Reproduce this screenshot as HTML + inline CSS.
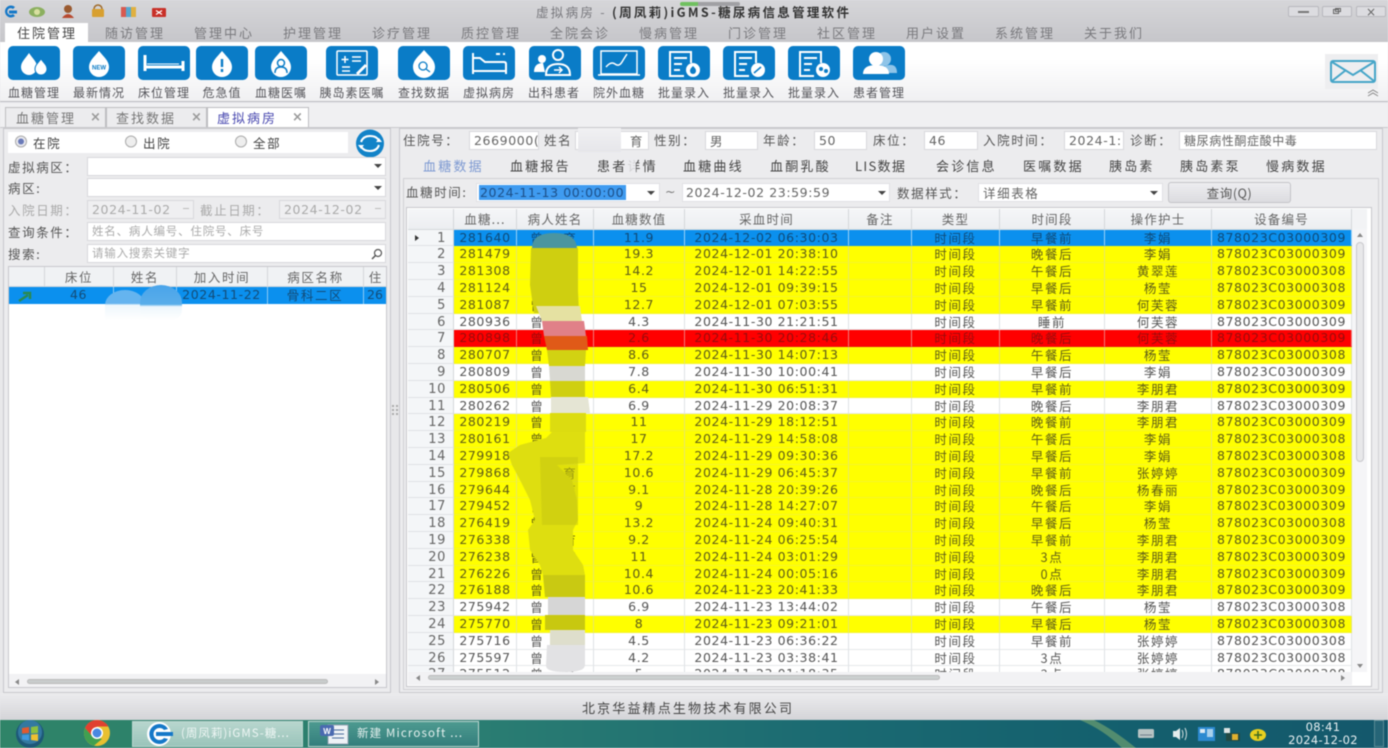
<!DOCTYPE html>
<html lang="zh"><head><meta charset="utf-8"><title>虚拟病房</title>
<style>
*{box-sizing:border-box;margin:0;padding:0}
html,body{width:1388px;height:748px;overflow:hidden;background:#e8e8ea}
body{position:relative;font-family:"DejaVu Sans","Noto Sans CJK SC",sans-serif;font-size:12.5px;color:#555}
#root{position:absolute;left:0;top:0;width:1388px;height:748px;overflow:hidden;filter:blur(.6px)}
.a{position:absolute;white-space:nowrap}
.c{font-family:"Noto Sans CJK SC",sans-serif}
.m{top:24px;font-size:13px;letter-spacing:2px;color:#7a7a7e;line-height:18px;font-family:"Noto Sans CJK SC",sans-serif}
.ic{position:absolute;top:46px;width:52px;height:34px;background:#0a7cc7;border-radius:5px}
.ic svg{display:block;width:52px;height:34px}
.lb{position:absolute;top:85px;width:80px;text-align:center;font:12px/15px "Noto Sans CJK SC",sans-serif;color:#55555a;letter-spacing:1px}
.dt{top:108px;font:13px/19px "Noto Sans CJK SC",sans-serif;letter-spacing:2px;color:#777}
.x{top:108px;font:bold 13px/19px "DejaVu Sans",sans-serif;color:#999}
.fl{font:12.5px/18px "Noto Sans CJK SC",sans-serif;letter-spacing:1.6px;color:#555}
.f{position:absolute;background:#fff;border:1px solid #d8d8dc;height:19px;line-height:17px;padding-left:4px;color:#666;overflow:hidden;white-space:nowrap;letter-spacing:.6px}
.g{background:#efeff1;color:#aaa}
.ar{position:absolute;width:0;height:0;border:4px solid transparent;border-top:4px solid #444;border-bottom:0}
.t{top:157px;font:13px/17px "Noto Sans CJK SC",sans-serif;letter-spacing:2.2px;color:#444}
.hd{position:absolute;display:grid;left:408px;top:209px;height:20.5px;grid-template-columns:46px 63px 77px 91px 164px 63px 88px 105px 107px 140px;background:linear-gradient(#f5f6f8,#eceef1);border-bottom:1px solid #d5d8dc}
.hd span{border-right:1px solid #d4d7da;text-align:center;font:12.5px/20px "Noto Sans CJK SC",sans-serif;letter-spacing:1.2px;color:#666}
.tb{position:absolute;left:408px;top:229.6px;width:944px;height:443px;overflow:hidden}
.r{display:grid;height:16.8px;grid-template-columns:46px 63px 77px 91px 164px 63px 88px 105px 107px 140px;line-height:16.5px;text-align:center;background:#fff;color:#555;letter-spacing:.6px}
.r span{border-right:1px solid #dfe2e5;border-bottom:1px solid #e6e8ea;overflow:hidden;white-space:nowrap}
.r span:first-child{background:#f4f6f8;color:#666;text-align:right;padding:1px 7px 0 0;border-right:1px solid #d4d7da;border-bottom:1px solid #e0e2e6;font-size:13px}
.r span:nth-child(7),.r span:nth-child(8),.r span:nth-child(9){font-family:"Noto Sans CJK SC",sans-serif;font-size:12.5px;letter-spacing:1.6px}
.r span:nth-child(3){font-family:"Noto Sans CJK SC",sans-serif;font-size:12.5px;letter-spacing:4px}
.y{background:#ff0;color:#5e5c18}.y span{border-right-color:#e6e66c;border-bottom-color:#f4f42c}
.d{background:#f00;color:#980c0c}.d span{border-right-color:#f07a7a;border-bottom-color:#e81010}
.b{background:#0b90ee;color:#0f4a78}.b span{border-right-color:#9ad2f8;border-bottom-color:#0b90ee}
.s{position:absolute}
.ts{position:absolute;top:721px;height:26px;border:1px solid #bcd6d0}
</style></head><body><div id="root">

<!-- title + menu -->
<div class="a" style="left:0;top:0;width:1388px;height:42px;background:linear-gradient(#d6d6d9,#c6c6ca)"></div>
<svg class="a" style="left:0;top:0" width="180" height="22" viewBox="0 0 180 22">
<path d="M15 7a6 6 0 1 0 0 9l-2-2a3.400 3.400 0 1 1 0-5z" fill="#1578c8"/><rect x="9" y="10.500" width="8" height="3" fill="#1578c8"/>
<ellipse cx="37" cy="12" rx="8" ry="5" fill="#8cb060"/><circle cx="37" cy="12" r="3" fill="#d8e0a0"/>
<circle cx="68" cy="9" r="4" fill="#9a5a30"/><path d="M62 18q6-8 12 0z" fill="#b84a30"/>
<rect x="92" y="9" width="12" height="8" rx="1" fill="#d8a030"/><path d="M94 9a4 4 0 0 1 8 0" fill="none" stroke="#a06a28" stroke-width="1.500"/>
<rect x="121" y="7" width="5" height="10" fill="#d85a50"/><rect x="126" y="7" width="5" height="10" fill="#58a8d0"/><rect x="131" y="7" width="5" height="10" fill="#e0b040"/>
<rect x="152" y="8" width="14" height="9" rx="1" fill="#c83028"/><path d="M156 10.500l6 4m0-4l-6 4" stroke="#fff" stroke-width="1.200"/>
</svg>
<div class="a" style="left:680px;top:2px;width:60px;height:4px;border-radius:3px;background:linear-gradient(90deg,#70c060 0,#70c060 30%,#a0a0a4 30%)"></div>
<div class="a c" style="left:536px;top:3px;font-size:12.5px;line-height:17px;color:#77777c;letter-spacing:2.3px">虚拟病房 - <span style="color:#333;font-weight:bold">(周凤莉)iGMS-糖尿病信息管理软件</span></div>
<div class="a" style="left:1288px;top:6px;width:31px;height:11px;background:#dcdce0;border:1px solid #b8b8bd;border-radius:2px"></div>
<div class="a" style="left:1298px;top:11px;width:11px;height:2px;background:#777"></div>
<div class="a" style="left:1322px;top:6px;width:30px;height:11px;background:#dcdce0;border:1px solid #b8b8bd;border-radius:2px"></div>
<div class="a" style="left:1333px;top:9px;width:6px;height:5px;border:1px solid #666"></div><div class="a" style="left:1335px;top:8px;width:6px;height:4px;border:1px solid #666"></div>
<div class="a" style="left:1356px;top:6px;width:30px;height:11px;background:#dcdce0;border:1px solid #b8b8bd;border-radius:2px"></div>
<div class="a" style="left:1366px;top:4px;font:12px/17px 'DejaVu Sans',sans-serif;color:#666">×</div>

<div class="a" style="left:5px;top:23px;width:83px;height:20px;background:#fff"></div>
<div class="a m" style="left:17px;color:#444">住院管理</div>
<div class="a m" style="left:105px">随访管理</div>
<div class="a m" style="left:194px">管理中心</div>
<div class="a m" style="left:283px">护理管理</div>
<div class="a m" style="left:372px">诊疗管理</div>
<div class="a m" style="left:461px">质控管理</div>
<div class="a m" style="left:550px">全院会诊</div>
<div class="a m" style="left:639px">慢病管理</div>
<div class="a m" style="left:728px">门诊管理</div>
<div class="a m" style="left:817px">社区管理</div>
<div class="a m" style="left:906px">用户设置</div>
<div class="a m" style="left:995px">系统管理</div>
<div class="a m" style="left:1084px">关于我们</div>

<!-- toolbar -->
<div class="a" style="left:0;top:42px;width:1388px;height:60px;background:linear-gradient(#fff 30%,#f0f0f2);border-bottom:1px solid #bcbcc0"></div>

<div class="ic" style="left:8px"><svg viewBox="0 0 52 34"><path d="M21 7c4 6 8 9 8 14a8 8 0 0 1-16 0c0-5 4-8 8-14z" fill="#fff"/><path d="M33 13c3 4 6 6 6 10a6 6 0 0 1-12 0c0-4 3-6 6-10z" fill="#fff" stroke="#0a7cc7"/></svg></div>
<div class="ic" style="left:73px"><svg viewBox="0 0 52 34"><path d="M26 5c5 6 10 10 10 16a10 10 0 0 1-20 0c0-6 5-10 10-16z" fill="#fff"/><text x="26" y="23.500" font-size="6" font-weight="bold" fill="#0a7cc7" text-anchor="middle" font-family="Liberation Sans">NEW</text></svg></div>
<div class="ic" style="left:138px"><svg viewBox="0 0 52 34"><path d="M7 9v16M45 15v10M7 21h38" stroke="#fff" stroke-width="3" fill="none"/><path d="M9 18h32" stroke="#fff" stroke-width="1"/></svg></div>
<div class="ic" style="left:196px"><svg viewBox="0 0 52 34"><path d="M26 5c5 6 10 10 10 16a10 10 0 0 1-20 0c0-6 5-10 10-16z" fill="#fff"/><path d="M26 13v8M26 23v3" stroke="#0a7cc7" stroke-width="2.400"/></svg></div>
<div class="ic" style="left:255px"><svg viewBox="0 0 52 34"><path d="M26 5c5 6 10 10 10 16a10 10 0 0 1-20 0c0-6 5-10 10-16z" fill="#fff"/><circle cx="26" cy="17" r="3.500" fill="none" stroke="#0a7cc7" stroke-width="1.500"/><path d="M20 27q0-6 6-6t6 6" fill="none" stroke="#0a7cc7" stroke-width="1.500"/></svg></div>
<div class="ic" style="left:326px"><svg viewBox="0 0 52 34"><rect x="11" y="5" width="30" height="24" rx="1" fill="none" stroke="#fff" stroke-width="1.500"/><path d="M19 10v7M15.500 13.500h7M26 11h9M26 15h9M16 21h8M16 25h8" stroke="#fff" stroke-width="1.500"/><path d="M30 27l9-9 2 2-9 9z" fill="#fff"/></svg></div>
<div class="ic" style="left:398px"><svg viewBox="0 0 52 34"><path d="M26 4c5 6 11 10 11 17a11 11 0 0 1-22 0c0-7 6-11 11-17z" fill="#fff"/><circle cx="25" cy="20" r="4" fill="none" stroke="#0a7cc7" stroke-width="1.300"/><path d="M28 23l4 3" stroke="#0a7cc7" stroke-width="1.300"/></svg></div>
<div class="ic" style="left:463px"><svg viewBox="0 0 52 34"><path d="M10 7v21M10 25h33v3M43 25v-7q0-2-2-2H22l-5-4h-7" fill="none" stroke="#fff" stroke-width="2"/><path d="M33 8h4M40 8h2" stroke="#fff" stroke-width="2"/></svg></div>
<div class="ic" style="left:529px"><svg viewBox="0 0 52 34"><circle cx="29" cy="9" r="5" fill="none" stroke="#fff" stroke-width="2"/><path d="M17 29q0-11 12-11t12 11z" fill="none" stroke="#fff" stroke-width="2"/><circle cx="13" cy="13" r="4" fill="#fff"/><path d="M5 26q0-9 9-9l2 9z" fill="#fff"/><path d="M25 24h8m-3-3l3 3-3 3" stroke="#fff" stroke-width="1.500" fill="none"/></svg></div>
<div class="ic" style="left:593px"><svg viewBox="0 0 52 34"><rect x="8" y="5" width="36" height="23" fill="none" stroke="#fff" stroke-width="1.500"/><path d="M5 29h42" stroke="#fff" stroke-width="1.500"/><path d="M13 21q5-6 9-3t7-2 5-8" fill="none" stroke="#fff" stroke-width="1.500"/></svg></div>
<div class="ic" style="left:658px"><svg viewBox="0 0 52 34"><path d="M33 17V6H12v24h14" fill="none" stroke="#fff" stroke-width="2"/><path d="M16 12h13M16 18h8M16 24h6" stroke="#fff" stroke-width="2"/><circle cx="35" cy="24" r="7" fill="#fff"/><path d="M35 20c2 2 3 3 3 5a3 3 0 0 1-6 0c0-2 1-3 3-5z" fill="#0a7cc7"/></svg></div>
<div class="ic" style="left:723px"><svg viewBox="0 0 52 34"><path d="M33 17V6H12v24h14" fill="none" stroke="#fff" stroke-width="2"/><path d="M16 12h13M16 18h8M16 24h6" stroke="#fff" stroke-width="2"/><circle cx="35" cy="24" r="7" fill="#fff"/><path d="M31 27l7-6" stroke="#0a7cc7" stroke-width="1.500"/></svg></div>
<div class="ic" style="left:788px"><svg viewBox="0 0 52 34"><path d="M33 17V6H12v24h14" fill="none" stroke="#fff" stroke-width="2"/><path d="M16 12h13M16 18h8M16 24h6" stroke="#fff" stroke-width="2"/><circle cx="35" cy="24" r="7" fill="#fff"/><circle cx="33" cy="23" r="2" fill="#0a7cc7"/><circle cx="38" cy="25" r="2" fill="#0a7cc7"/></svg></div>
<div class="ic" style="left:853px"><svg viewBox="0 0 52 34"><circle cx="31" cy="13" r="7" fill="#8fc4e8"/><path d="M28 27q0-7 8-8t8 8z" fill="#8fc4e8"/><circle cx="23" cy="13" r="7" fill="#fff"/><path d="M10 28q0-9 13-9t13 9z" fill="#fff"/></svg></div>

<div class="lb" style="left:-6px">血糖管理</div><div class="lb" style="left:59px">最新情况</div><div class="lb" style="left:124px">床位管理</div><div class="lb" style="left:182px">危急值</div><div class="lb" style="left:241px">血糖医嘱</div><div class="lb" style="left:312px">胰岛素医嘱</div><div class="lb" style="left:384px">查找数据</div><div class="lb" style="left:449px">虚拟病房</div><div class="lb" style="left:514px">出科患者</div><div class="lb" style="left:579px">院外血糖</div><div class="lb" style="left:644px">批量录入</div><div class="lb" style="left:709px">批量录入</div><div class="lb" style="left:774px">批量录入</div><div class="lb" style="left:839px">患者管理</div>

<div class="a" style="left:1325px;top:54px;width:53px;height:35px;background:#eeeef0"></div>
<svg class="a" style="left:1329px;top:59px" width="48" height="25" viewBox="0 0 48 25"><rect x="2" y="2" width="44" height="21" rx="2" fill="none" stroke="#45a5c8" stroke-width="2"/><path d="M3 3l21 13L45 3M3 22l14-11M45 22L31 11" fill="none" stroke="#45a5c8" stroke-width="2"/></svg>
<svg class="a" style="left:1366px;top:88px" width="14" height="9" viewBox="0 0 14 9"><path d="M2 5l5-3 5 3M2 8l5-3 5 3" fill="none" stroke="#888"/></svg>

<!-- doc tabs -->
<div class="a" style="left:0;top:103px;width:1388px;height:24px;background:#f0f0f2"></div>
<div class="a" style="left:5px;top:107px;width:101px;height:21px;background:#ececee;border:1px solid #bdbdc0;border-bottom:0"></div>
<div class="a" style="left:106px;top:107px;width:101px;height:21px;background:#ececee;border:1px solid #bdbdc0;border-bottom:0"></div>
<div class="a" style="left:207px;top:107px;width:102px;height:21px;background:#fff;border:1px solid #bdbdc0;border-bottom:0"></div>
<div class="a dt" style="left:16px">血糖管理</div><div class="a x" style="left:90px">×</div>
<div class="a dt" style="left:116px">查找数据</div><div class="a x" style="left:191px">×</div>
<div class="a dt" style="left:217px;color:#4a4ab0">虚拟病房</div><div class="a x" style="left:292px">×</div>
<div class="a" style="left:0;top:127px;width:1388px;height:1px;background:#c8c8cc"></div>

<!-- left panel -->
<div class="a" style="left:3px;top:128px;width:388px;height:565px;background:#ececee;border:1px solid #c8c8cc"></div>
<div class="a" style="left:8px;top:132px;width:340px;height:21px;background:#fff"></div>
<svg class="a" style="left:8px;top:132px" width="260" height="21" viewBox="0 0 260 21"><circle cx="13" cy="9.500" r="5.500" fill="#e8e8ee" stroke="#aaa"/><circle cx="13" cy="9.500" r="3" fill="#6a7ab8"/><circle cx="123" cy="9.500" r="5.500" fill="#eee" stroke="#aaa"/><circle cx="233" cy="9.500" r="5.500" fill="#eee" stroke="#aaa"/></svg>
<div class="a fl" style="left:33px;top:134px;color:#444">在院</div><div class="a fl" style="left:143px;top:134px;color:#444">出院</div><div class="a fl" style="left:253px;top:134px;color:#444">全部</div>
<svg class="a" style="left:355px;top:129px" width="30" height="29" viewBox="0 0 30 29"><circle cx="15" cy="14.500" r="14" fill="#1283c8"/><path d="M6 13q2-6 9-6t9 5M24 16q-2 6-9 6t-9-5" fill="none" stroke="#fff" stroke-width="2"/><path d="M21 13h6l-3-4zM9 16H3l3 4z" fill="#fff"/></svg>

<div class="a fl" style="left:8px;top:158px">虚拟病区：</div><div class="f" style="left:87px;top:157px;width:299px"></div><div class="ar" style="left:374px;top:164px"></div>
<div class="a fl" style="left:8px;top:179px">病区:</div><div class="f" style="left:87px;top:178px;width:299px"></div><div class="ar" style="left:374px;top:186px"></div>
<div class="a fl" style="left:8px;top:201px;color:#aaa">入院日期：</div><div class="f g" style="left:87px;top:200px;width:107px">2024-11-02</div><div class="a" style="left:183px;top:208px;width:6px;height:1px;background:#bbb"></div>
<div class="a fl" style="left:200px;top:201px;color:#aaa">截止日期：</div><div class="f g" style="left:279px;top:200px;width:107px">2024-12-02</div><div class="a" style="left:375px;top:208px;width:6px;height:1px;background:#bbb"></div>
<div class="a fl" style="left:8px;top:223px">查询条件：</div><div class="f c" style="left:87px;top:222px;width:299px;color:#aaa;font-size:11.5px;letter-spacing:.8px">姓名、病人编号、住院号、床号</div>
<div class="a fl" style="left:8px;top:245px">搜索:</div><div class="f c" style="left:87px;top:244px;width:299px;color:#aaa;font-size:11.5px;letter-spacing:.8px">请输入搜索关键字</div>
<svg class="a" style="left:370px;top:247px" width="14" height="14" viewBox="0 0 14 14"><circle cx="8" cy="6" r="3.500" fill="none" stroke="#555" stroke-width="1.200"/><path d="M5.500 8.500L2 12" stroke="#555" stroke-width="1.500"/></svg>

<div class="a" style="left:8px;top:266px;width:379px;height:422px;background:#fff;border:1px solid #c8c8cc"></div>
<div class="a" style="left:9px;top:267px;width:377px;height:20px;background:#f0f2f4;border-bottom:1px solid #d5d8dc;overflow:hidden"></div>
<div class="a" style="left:44px;top:267px;width:69px;height:20px;border-left:1px solid #d4d7da;text-align:center;font:12.500px/19px 'Noto Sans CJK SC',sans-serif;letter-spacing:1.600px;color:#666">床位</div>
<div class="a" style="left:113px;top:267px;width:63px;height:20px;border-left:1px solid #d4d7da;text-align:center;font:12.500px/19px 'Noto Sans CJK SC',sans-serif;letter-spacing:1.600px;color:#666">姓名</div>
<div class="a" style="left:176px;top:267px;width:91px;height:20px;border-left:1px solid #d4d7da;text-align:center;font:12.500px/19px 'Noto Sans CJK SC',sans-serif;letter-spacing:1.600px;color:#666">加入时间</div>
<div class="a" style="left:267px;top:267px;width:96px;height:20px;border-left:1px solid #d4d7da;text-align:center;font:12.500px/19px 'Noto Sans CJK SC',sans-serif;letter-spacing:1.600px;color:#666">病区名称</div>
<div class="a" style="left:363px;top:267px;width:23px;height:20px;border-left:1px solid #d4d7da;overflow:hidden;text-align:center;font:12.500px/19px 'Noto Sans CJK SC',sans-serif;color:#666">住</div>
<div class="a" style="left:9px;top:287px;width:377px;height:16.500px;background:#0b90ee"></div>
<svg class="a" style="left:12px;top:288px" width="30" height="15" viewBox="0 0 30 15"><path d="M7 13l9-6M11 5h7v6" fill="none" stroke="#2a8a50" stroke-width="2.500"/></svg>
<div class="a" style="left:44px;top:287px;width:69px;text-align:center;line-height:16px;color:#134c78;letter-spacing:.6px">46</div>
<div class="a" style="left:176px;top:287px;width:91px;text-align:center;line-height:16px;color:#134c78;letter-spacing:.6px">2024-11-22</div>
<div class="a c" style="left:267px;top:287px;width:96px;text-align:center;line-height:16px;color:#134c78;letter-spacing:1.600px">骨科二区</div>
<div class="a" style="left:367px;top:287px;width:19px;overflow:hidden;line-height:16px;color:#134c78">26</div>
<div class="a" style="left:113px;top:287px;width:1px;height:17px;background:#8ccaf5"></div><div class="a" style="left:176px;top:287px;width:1px;height:17px;background:#8ccaf5"></div><div class="a" style="left:267px;top:287px;width:1px;height:17px;background:#8ccaf5"></div><div class="a" style="left:363px;top:287px;width:1px;height:17px;background:#8ccaf5"></div>
<!-- left blob -->
<div class="s" style="left:105px;top:290px;width:40px;height:30px;border-radius:50% 50% 0 0;background:linear-gradient(#65b4ef 0,#65b4ef 45%,#eef7fc 50%,#fff 100%)"></div>
<div class="s" style="left:140px;top:285px;width:42px;height:35px;border-radius:50% 50% 10px 10px;background:linear-gradient(#4aa4ea 0,#5aaeea 55%,#eef7fc 62%,#fff 100%)"></div>

<div class="a" style="left:9px;top:674px;width:377px;height:13px;background:#f2f2f4"></div>
<div class="a" style="left:27px;top:679px;width:301px;height:5px;border-radius:3px;background:#c8cccc;border:1px solid #bbb"></div>
<div class="a" style="left:15px;top:679px;border:3px solid transparent;border-right:4px solid #888;border-left:0"></div>
<div class="a" style="left:375px;top:679px;border:3px solid transparent;border-left:4px solid #888;border-right:0"></div>

<div class="a" style="left:392px;top:405px;width:6px;height:10px;border-left:2px dotted #aaa;border-right:2px dotted #aaa"></div>

<!-- right panel -->
<div class="a" style="left:399px;top:128px;width:984px;height:565px;background:#ececee;border:1px solid #c8c8cc"></div>
<div class="a fl" style="left:403px;top:131px">住院号：</div><div class="f" style="left:469px;top:131px;width:70px">2669000(</div>
<div class="a fl" style="left:544px;top:131px">姓名</div><div class="f c" style="left:575px;top:131px;width:74px;text-align:right;padding-right:5px">育</div>
<div class="a fl" style="left:654px;top:131px">性别：</div><div class="f c" style="left:705px;top:131px;width:53px">男</div>
<div class="a fl" style="left:763px;top:131px">年龄：</div><div class="f" style="left:814px;top:131px;width:53px">50</div>
<div class="a fl" style="left:873px;top:131px">床位：</div><div class="f" style="left:924px;top:131px;width:54px">46</div>
<div class="a fl" style="left:983px;top:131px">入院时间：</div><div class="f" style="left:1064px;top:131px;width:60px">2024-1:</div>
<div class="a fl" style="left:1130px;top:131px">诊断：</div><div class="f c" style="left:1179px;top:131px;width:198px;font-size:12px;letter-spacing:.6px">糖尿病性酮症酸中毒</div>
<div class="s" style="left:578px;top:128px;width:43px;height:24px;background:linear-gradient(#f1f1f3,#e6e6ea)"></div>

<div class="a t" style="left:423px;color:#7e9ad2">血糖数据</div><div class="a t" style="left:510px">血糖报告</div><div class="a t" style="left:597px">患者详情</div><div class="a t" style="left:683px">血糖曲线</div><div class="a t" style="left:770px">血酮乳酸</div><div class="a t" style="left:855px;letter-spacing:1.300px">LIS数据</div><div class="a t" style="left:936px">会诊信息</div><div class="a t" style="left:1023px">医嘱数据</div><div class="a t" style="left:1109px">胰岛素</div><div class="a t" style="left:1180px">胰岛素泵</div><div class="a t" style="left:1266px">慢病数据</div>
<div class="s" style="left:625px;top:158px;width:11px;height:15px;background:#ececee;opacity:.85"></div>

<div class="a" style="left:403px;top:178px;width:976px;height:512px;background:#ececee;border:1px solid #d0d0d4"></div>
<div class="a fl" style="left:406px;top:183px">血糖时间:</div>
<div class="f" style="left:476px;top:183px;width:184px;border-color:#e0e0e4"></div>
<div class="a" style="left:479px;top:185px;width:147px;height:15px;background:#3f9bf0;color:#1c4f88;line-height:15px;padding-left:1px;letter-spacing:.6px;overflow:hidden">2024-11-13 00:00:00</div>
<div class="ar" style="left:647px;top:191px"></div>
<div class="a" style="left:665px;top:183px;line-height:18px;color:#777">~</div>
<div class="f" style="left:682px;top:183px;width:208px;border-color:#e0e0e4;padding-left:3px">2024-12-02 23:59:59</div><div class="ar" style="left:878px;top:191px"></div>
<div class="a fl" style="left:897px;top:184px">数据样式：</div>
<div class="f c" style="left:978px;top:183px;width:185px;border-color:#e0e0e4;letter-spacing:1.600px">详细表格</div><div class="ar" style="left:1150px;top:191px"></div>
<div class="a c" style="left:1168px;top:182px;width:123px;height:21px;background:linear-gradient(#ededf0,#dcdce0);border:1px solid #c4c4c8;border-radius:3px;text-align:center;line-height:19px;color:#555;font-size:12.500px;letter-spacing:.6px">查询(Q)</div>

<!-- table -->
<div class="a" style="left:406px;top:207px;width:966px;height:480px;background:#fff;border:1px solid #c8c8cc"></div>
<div class="hd"><span></span><span>血糖...</span><span>病人姓名</span><span>血糖数值</span><span>采血时间</span><span>备注</span><span>类型</span><span>时间段</span><span>操作护士</span><span>设备编号</span></div>
<div class="a" style="left:1352px;top:209px;width:15px;height:20px;background:#f2f3f5"></div>
<div class="tb">
<div class="r b"><span>1</span><span>281640</span><span>曾&emsp;育</span><span>11.9</span><span>2024-12-02 06:30:03</span><span></span><span>时间段</span><span>早餐前</span><span>李娟</span><span>878023C03000309</span></div>
<div class="r y"><span>2</span><span>281479</span><span>曾&emsp;育</span><span>19.3</span><span>2024-12-01 20:38:10</span><span></span><span>时间段</span><span>晚餐后</span><span>李娟</span><span>878023C03000309</span></div>
<div class="r y"><span>3</span><span>281308</span><span>曾&emsp;育</span><span>14.2</span><span>2024-12-01 14:22:55</span><span></span><span>时间段</span><span>午餐后</span><span>黄翠莲</span><span>878023C03000308</span></div>
<div class="r y"><span>4</span><span>281124</span><span>曾&emsp;育</span><span>15</span><span>2024-12-01 09:39:15</span><span></span><span>时间段</span><span>早餐后</span><span>杨莹</span><span>878023C03000308</span></div>
<div class="r y"><span>5</span><span>281087</span><span>曾&emsp;育</span><span>12.7</span><span>2024-12-01 07:03:55</span><span></span><span>时间段</span><span>早餐前</span><span>何芙蓉</span><span>878023C03000309</span></div>
<div class="r"><span>6</span><span>280936</span><span>曾&emsp;育</span><span>4.3</span><span>2024-11-30 21:21:51</span><span></span><span>时间段</span><span>睡前</span><span>何芙蓉</span><span>878023C03000309</span></div>
<div class="r d"><span>7</span><span>280898</span><span>曾&emsp;育</span><span>2.6</span><span>2024-11-30 20:28:46</span><span></span><span>时间段</span><span>晚餐后</span><span>何芙蓉</span><span>878023C03000309</span></div>
<div class="r y"><span>8</span><span>280707</span><span>曾&emsp;育</span><span>8.6</span><span>2024-11-30 14:07:13</span><span></span><span>时间段</span><span>午餐后</span><span>杨莹</span><span>878023C03000308</span></div>
<div class="r"><span>9</span><span>280809</span><span>曾&emsp;育</span><span>7.8</span><span>2024-11-30 10:00:41</span><span></span><span>时间段</span><span>早餐后</span><span>李娟</span><span>878023C03000309</span></div>
<div class="r y"><span>10</span><span>280506</span><span>曾&emsp;育</span><span>6.4</span><span>2024-11-30 06:51:31</span><span></span><span>时间段</span><span>早餐前</span><span>李朋君</span><span>878023C03000309</span></div>
<div class="r"><span>11</span><span>280262</span><span>曾&emsp;育</span><span>6.9</span><span>2024-11-29 20:08:37</span><span></span><span>时间段</span><span>晚餐后</span><span>李朋君</span><span>878023C03000309</span></div>
<div class="r y"><span>12</span><span>280219</span><span>曾&emsp;育</span><span>11</span><span>2024-11-29 18:12:51</span><span></span><span>时间段</span><span>晚餐前</span><span>李朋君</span><span>878023C03000309</span></div>
<div class="r y"><span>13</span><span>280161</span><span>曾&emsp;育</span><span>17</span><span>2024-11-29 14:58:08</span><span></span><span>时间段</span><span>午餐后</span><span>李娟</span><span>878023C03000308</span></div>
<div class="r y"><span>14</span><span>279918</span><span>曾&emsp;育</span><span>17.2</span><span>2024-11-29 09:30:36</span><span></span><span>时间段</span><span>早餐后</span><span>李娟</span><span>878023C03000308</span></div>
<div class="r y"><span>15</span><span>279868</span><span>曾&emsp;育</span><span>10.6</span><span>2024-11-29 06:45:37</span><span></span><span>时间段</span><span>早餐前</span><span>张婷婷</span><span>878023C03000309</span></div>
<div class="r y"><span>16</span><span>279644</span><span>曾&emsp;育</span><span>9.1</span><span>2024-11-28 20:39:26</span><span></span><span>时间段</span><span>晚餐后</span><span>杨春丽</span><span>878023C03000309</span></div>
<div class="r y"><span>17</span><span>279452</span><span>曾&emsp;育</span><span>9</span><span>2024-11-28 14:27:07</span><span></span><span>时间段</span><span>午餐后</span><span>李娟</span><span>878023C03000309</span></div>
<div class="r y"><span>18</span><span>276419</span><span>曾&emsp;育</span><span>13.2</span><span>2024-11-24 09:40:31</span><span></span><span>时间段</span><span>早餐后</span><span>杨莹</span><span>878023C03000308</span></div>
<div class="r y"><span>19</span><span>276338</span><span>曾&emsp;育</span><span>9.2</span><span>2024-11-24 06:25:54</span><span></span><span>时间段</span><span>早餐前</span><span>李朋君</span><span>878023C03000309</span></div>
<div class="r y"><span>20</span><span>276238</span><span>曾&emsp;育</span><span>11</span><span>2024-11-24 03:01:29</span><span></span><span>时间段</span><span>3点</span><span>李朋君</span><span>878023C03000309</span></div>
<div class="r y"><span>21</span><span>276226</span><span>曾&emsp;育</span><span>10.4</span><span>2024-11-24 00:05:16</span><span></span><span>时间段</span><span>0点</span><span>李朋君</span><span>878023C03000309</span></div>
<div class="r y"><span>22</span><span>276188</span><span>曾&emsp;育</span><span>10.6</span><span>2024-11-23 20:41:33</span><span></span><span>时间段</span><span>晚餐后</span><span>李朋君</span><span>878023C03000309</span></div>
<div class="r"><span>23</span><span>275942</span><span>曾&emsp;育</span><span>6.9</span><span>2024-11-23 13:44:02</span><span></span><span>时间段</span><span>午餐后</span><span>杨莹</span><span>878023C03000308</span></div>
<div class="r y"><span>24</span><span>275770</span><span>曾&emsp;育</span><span>8</span><span>2024-11-23 09:21:01</span><span></span><span>时间段</span><span>早餐后</span><span>杨莹</span><span>878023C03000308</span></div>
<div class="r"><span>25</span><span>275716</span><span>曾&emsp;育</span><span>4.5</span><span>2024-11-23 06:36:22</span><span></span><span>时间段</span><span>早餐前</span><span>张婷婷</span><span>878023C03000308</span></div>
<div class="r"><span>26</span><span>275597</span><span>曾&emsp;育</span><span>4.2</span><span>2024-11-23 03:38:41</span><span></span><span>时间段</span><span>3点</span><span>张婷婷</span><span>878023C03000308</span></div>
<div class="r"><span>27</span><span>275512</span><span>曾&emsp;育</span><span>5</span><span>2024-11-23 01:18:35</span><span></span><span>时间段</span><span>3点</span><span>张婷婷</span><span>878023C03000308</span></div>
</div>
<div class="a" style="left:415px;top:235px;border:3px solid transparent;border-left:4px solid #333;border-right:0"></div>
<!-- smudge over name column -->
<svg class="s" style="left:500px;top:225px" width="110" height="455" viewBox="0 0 110 455">
<path d="M32 23Q32 8 54 8T77 23V24H32z" fill="#4b95a0"/>
<path d="M31 23H78V66L79 88H34L30 60z" fill="#cfcf10"/>
<path d="M36 81H80L82 96H42z" fill="#e5e1a2"/>
<path d="M42 96H84L86 111H44z" fill="#e08088"/>
<path d="M44 111H87L88 125H47z" fill="#e05a18"/>
<path d="M47 125H86L85 141H49z" fill="#d2d212"/>
<path d="M49 141H85V156H50z" fill="#d8d8d2"/>
<path d="M50 156H85V172H51z" fill="#cfcf10"/>
<path d="M51 172H88L90 188H51z" fill="#e5e5d4"/>
<path d="M50 188H86V207H50z" fill="#dcdc10"/>
<path d="M52 207H85V238L57 240 72 255 77 275 78 295 73 305 73 325 83 340 85 350H43L40 340 30 325 28 305 35 295 30 275 20 255 12 240 8 228 20 220 46 213z" fill="#dede10"/>
<path d="M40 232H78V300H42z" fill="#c6c610" opacity=".55"/>
<path d="M43 350H85V372H45z" fill="#c9c912"/>
<path d="M48 372H85V390H48z" fill="#d6d6d6"/>
<path d="M45 390H85V405H45z" fill="#c8c810"/>
<path d="M50 405H85V420H50z" fill="#dedecc"/>
<path d="M47 420H85V440Q85 447 65 447T46 440z" fill="#e2e2e4"/>
</svg>

<!-- table scrollbars -->
<div class="a" style="left:1352px;top:229px;width:15px;height:443px;background:#f5f5f7"></div>
<div class="a" style="left:1356px;top:242px;width:8px;height:220px;background:#e8e8ea;border:1px solid #c8c8cc;border-radius:4px"></div>
<div class="a" style="left:1357px;top:233px;border:3px solid transparent;border-bottom:4px solid #888;border-top:0"></div>
<div class="a" style="left:1357px;top:664px;border:3px solid transparent;border-top:4px solid #888;border-bottom:0"></div>
<div class="a" style="left:408px;top:672px;width:944px;height:13px;background:#f2f2f4"></div>
<div class="a" style="left:428px;top:675px;width:512px;height:5px;border-radius:3px;background:#ccd0d0;border:1px solid #bbb"></div>
<div class="a" style="left:416px;top:675px;border:3px solid transparent;border-right:4px solid #888;border-left:0"></div>
<div class="a" style="left:1341px;top:675px;border:3px solid transparent;border-left:4px solid #888;border-right:0"></div>

<!-- footer -->
<div class="a" style="left:0;top:693px;width:1388px;height:27px;background:linear-gradient(#ececee,#d4d4d8)"></div>
<div class="a c" style="left:582px;top:700px;font-size:13px;line-height:16px;color:#444;letter-spacing:2.15px">北京华益精点生物技术有限公司</div>

<!-- taskbar -->
<div class="a" style="left:0;top:720px;width:1388px;height:28px;background:linear-gradient(90deg,#2f8468 0,#2a7d72 35%,#1b6a72 60%,#14606e 80%,#14586c 100%)"></div>
<svg class="a" style="left:1080px;top:720px" width="70" height="28" viewBox="0 0 70 28"><path d="M0 0H14Q34 10 56 28H42Q24 10 0 0z" fill="#7caa70" opacity=".6"/></svg>
<svg class="a" style="left:8px;top:720px" width="110" height="28" viewBox="0 0 110 28"><circle cx="22" cy="14" r="14" fill="#1d5878"/><circle cx="22" cy="12" r="12" fill="#3d88b0" opacity=".7"/><path d="M14 8l7-1v6l-7 .5z" fill="#e05a30"/><path d="M23 7l7-1v7l-7 .500z" fill="#8cc040"/><path d="M14 15l7-.5v6l-7-1z" fill="#3f9ae0"/><path d="M23 14.500l7-.5v7l-7-1z" fill="#f0c030"/><circle cx="89" cy="13" r="13" fill="#e8c030"/><path d="M89 0a13 13 0 0 1 11.300 6.500H89z" fill="#e04030"/><path d="M77 8a13 13 0 0 1 12-8l0 6.500L84 16z" fill="#e04030"/><path d="M77 8a13 13 0 0 0 9 17.600L94 19 84 16z" fill="#40a050"/><circle cx="89" cy="13" r="6" fill="#fff"/><circle cx="89" cy="13" r="4.500" fill="#4a88e0"/></svg>
<div class="ts" style="left:132px;width:171px;background:linear-gradient(#b8d6ce,#9ac4ba)"></div>
<svg class="a" style="left:142px;top:721px" width="36" height="26" viewBox="0 0 36 26"><circle cx="17" cy="13" r="12" fill="#fff"/><path d="M26 8a10 10 0 1 0 0 10l-4-1a6 6 0 1 1 0-8z" fill="#1578c8"/><rect x="14" y="11" width="17" height="4" fill="#1578c8"/></svg>
<div class="a c" style="left:181px;top:725px;font-size:11.500px;line-height:16px;color:#eef6f4;letter-spacing:1px">(周凤莉)iGMS-糖...</div>
<div class="ts" style="left:308px;width:171px;background:linear-gradient(#4d9a90,#347e7c)"></div>
<svg class="a" style="left:318px;top:722px" width="34" height="24" viewBox="0 0 34 24"><rect x="10" y="3" width="20" height="19" fill="#eef2f6" stroke="#90a0b0"/><path d="M14 8h12M14 12h12M14 16h12" stroke="#4a6a9a"/><rect x="2" y="3" width="14" height="11" rx="2" fill="#4a6ab0"/><text x="9" y="12" font-size="8" fill="#fff" text-anchor="middle" font-family="Liberation Sans" font-weight="bold">W</text></svg>
<div class="a c" style="left:357px;top:725px;font-size:11.500px;line-height:16px;color:#e4f0ee;letter-spacing:1.150px">新建 Microsoft ...</div>
<svg class="a" style="left:1130px;top:722px" width="140" height="24" viewBox="0 0 140 24"><rect x="8" y="7" width="16" height="9" rx="1.500" fill="#b8c4c4"/><path d="M10 13h12" stroke="#70808a"/><path d="M43 9h3l4-3v12l-4-3h-3z" fill="#e4ecec"/><path d="M52 8q2 4 0 8M55 6q3 6 0 12" fill="none" stroke="#d4e0e0"/><rect x="68" y="5" width="17" height="14" fill="#2c8ad0"/><rect x="70" y="7" width="5" height="4" fill="#dceaf4"/><rect x="77" y="7" width="6" height="8" fill="#a8d0ec"/><rect x="94" y="6" width="6" height="5" fill="#dde4e4"/><rect x="96" y="11" width="14" height="8" fill="#234a44"/><rect x="102" y="12" width="6" height="6" fill="#e0b030"/><ellipse cx="128" cy="13" rx="8" ry="6" fill="#e8d020"/><path d="M124 13h8M128 9v8" stroke="#3a6a20" stroke-width="1.500"/></svg>
<div class="a" style="left:1290px;top:721px;width:66px;text-align:center;font:11.500px/13px 'DejaVu Sans',sans-serif;color:#e8f0f2;letter-spacing:.3px">08:41</div>
<div class="a" style="left:1287px;top:734px;width:72px;text-align:center;font:11.500px/13px 'DejaVu Sans',sans-serif;color:#e8f0f2;letter-spacing:.3px">2024-12-02</div>
<div class="a" style="left:1374px;top:720px;width:10px;height:27px;border:1px solid #5a8a94;background:rgba(255,255,255,.08)"></div>

</div></body></html>
